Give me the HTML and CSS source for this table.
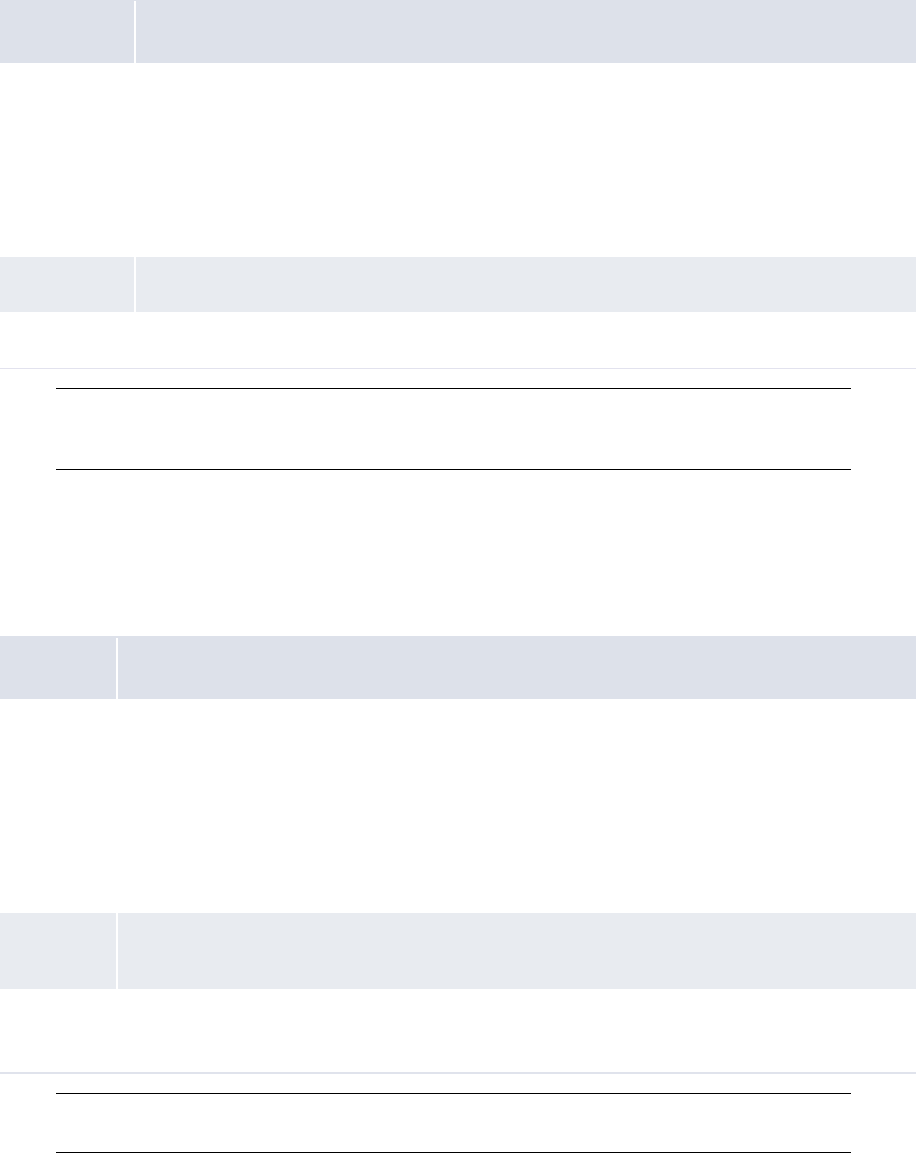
FILE: index.html
```html
<!DOCTYPE html>
<html>
<head>
<meta charset="utf-8">
<link rel="stylesheet" href="styles.css">
</head>
<body>
<div class="page">
  <section class="group group-a">
    <div class="band band-dark band-a1">
      <div class="cell cell-left w134"></div>
      <div class="divider offset1"></div>
      <div class="cell cell-right"></div>
    </div>
    <div class="band band-light band-a2">
      <div class="cell cell-left w134"></div>
      <div class="divider"></div>
      <div class="cell cell-right"></div>
    </div>
    <hr class="sep sep-thin">
    <div class="ruled ruled-a">
      <div class="rule"></div>
      <div class="ruled-body body-a"></div>
      <div class="rule"></div>
    </div>
  </section>
  <section class="group group-b">
    <div class="band band-dark band-b1">
      <div class="cell cell-left w116"></div>
      <div class="divider offset2"></div>
      <div class="cell cell-right"></div>
    </div>
    <div class="band band-light band-b2">
      <div class="cell cell-left w116"></div>
      <div class="divider"></div>
      <div class="cell cell-right"></div>
    </div>
    <hr class="sep sep-thick">
    <div class="ruled ruled-b">
      <div class="rule"></div>
      <div class="ruled-body body-b"></div>
      <div class="rule"></div>
    </div>
  </section>
</div>
</body>
</html>
```
FILE: styles.css
```css
html, body {
  margin: 0;
  padding: 0;
  background: #ffffff;
  font-family: "Liberation Sans", Arial, sans-serif;
}
.page {
  width: 916px;
  display: flex;
  flex-direction: column;
}
.group {
  display: flex;
  flex-direction: column;
}
.band {
  display: flex;
  align-items: stretch;
}
.band-dark { background: #dde1ea; }
.band-light { background: #e8ebf0; }
.cell-right { flex: 1; }
.w134 { width: 134px; }
.w116 { width: 116px; }
.divider {
  width: 2px;
  background: #ffffff;
}
.offset1 { margin-top: 1px; }
.offset2 { margin-top: 2px; }

.band-a1 { height: 63px; }
.band-a2 { height: 55px; margin-top: 194px; }
.sep {
  border: none;
  margin: 0;
  width: 100%;
}
.group-a .sep { margin-top: 56px; }
.sep-thin { height: 1px; background: #e2e2ee; }
.sep-thick { height: 2px; background: #e0e3ec; }

.ruled {
  display: flex;
  flex-direction: column;
  padding: 0 65px 0 56px;
}
.rule {
  height: 1px;
  background: #000000;
}
.ruled-a { margin-top: 19px; }
.body-a { height: 80px; }

.group-b { margin-top: 166px; }
.band-b1 { height: 63px; }
.band-b2 { height: 76px; margin-top: 214px; }
.group-b .sep { margin-top: 83px; }
.ruled-b { margin-top: 19px; }
.body-b { height: 58px; }
```
